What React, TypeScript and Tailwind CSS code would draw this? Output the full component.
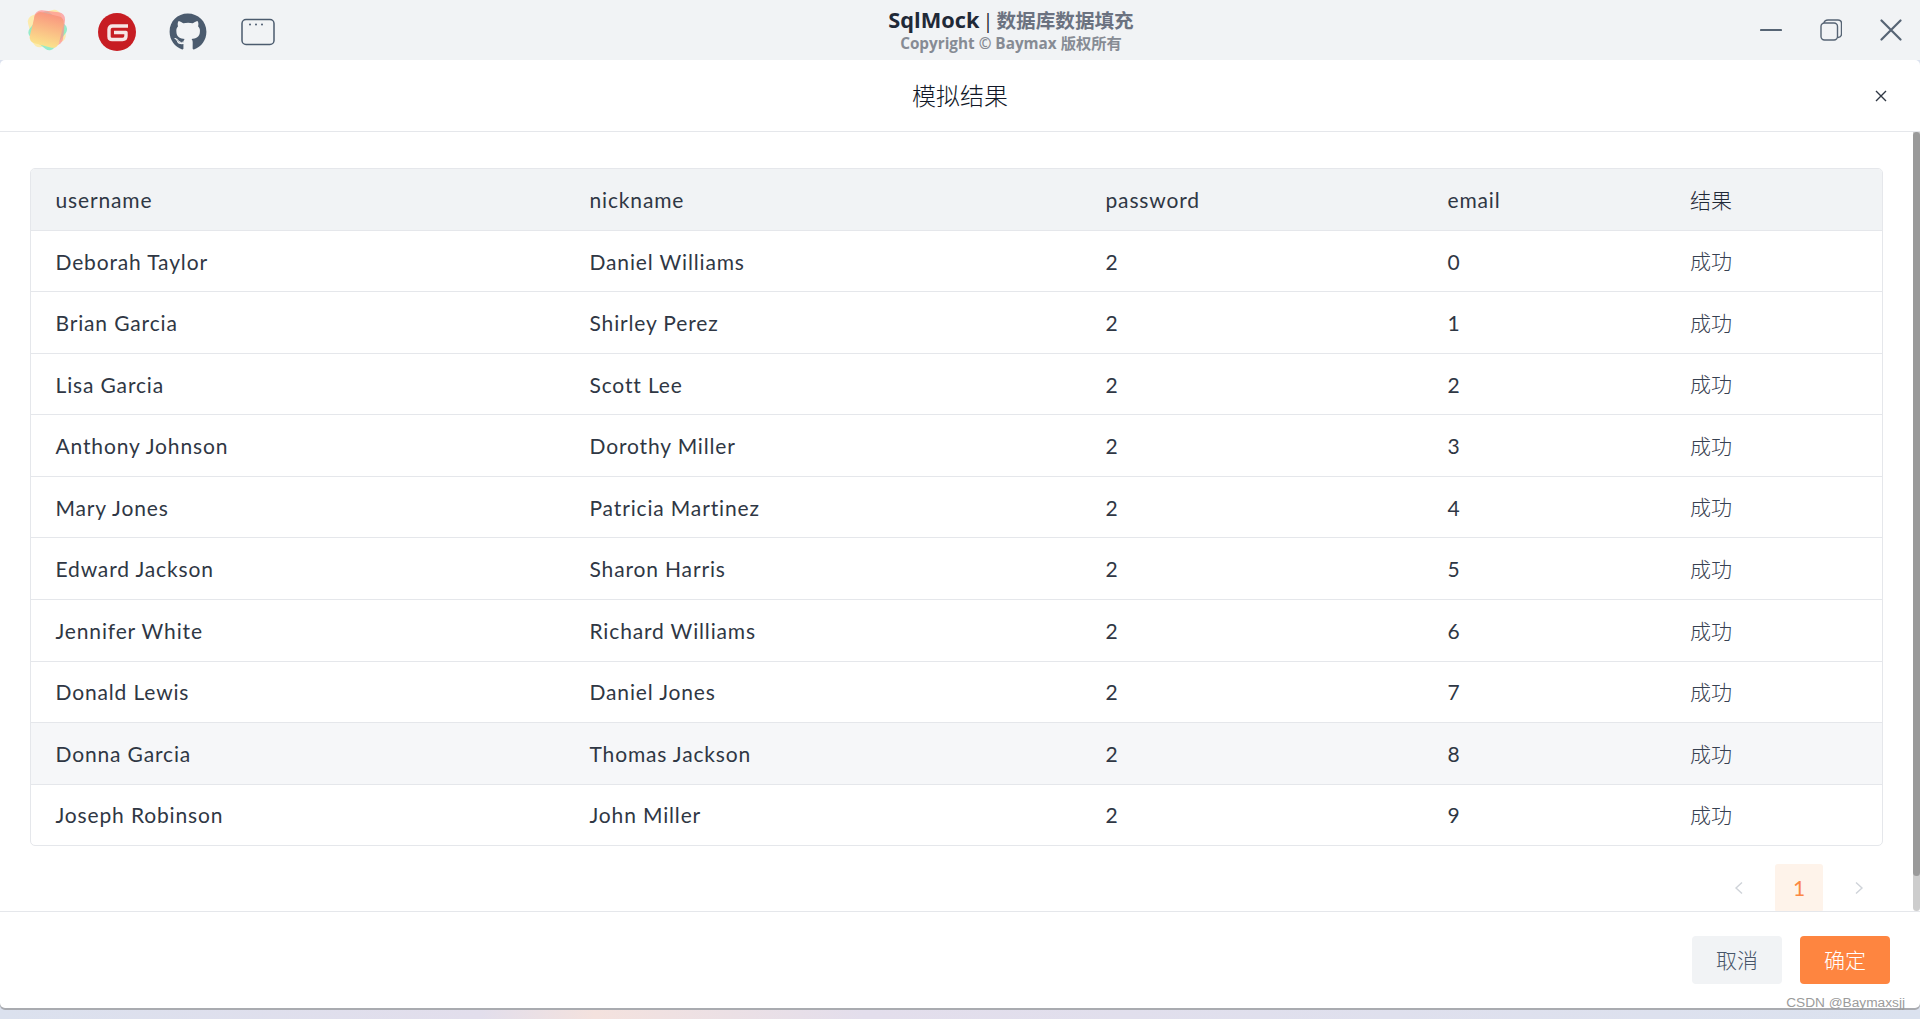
import React from "react";
import { FaGithub } from "react-icons/fa";

const rows = [
  ["Deborah Taylor", "Daniel Williams", "2", "0"],
  ["Brian Garcia", "Shirley Perez", "2", "1"],
  ["Lisa Garcia", "Scott Lee", "2", "2"],
  ["Anthony Johnson", "Dorothy Miller", "2", "3"],
  ["Mary Jones", "Patricia Martinez", "2", "4"],
  ["Edward Jackson", "Sharon Harris", "2", "5"],
  ["Jennifer White", "Richard Williams", "2", "6"],
  ["Donald Lewis", "Daniel Jones", "2", "7"],
  ["Donna Garcia", "Thomas Jackson", "2", "8"],
  ["Joseph Robinson", "John Miller", "2", "9"],
];

const rowHeights = ["h-[61px]", "h-[62px]", "h-[61px]", "h-[62px]", "h-[61px]", "h-[62px]", "h-[62px]", "h-[61px]", "h-[62px]", "h-[60px]"];
const font = { fontFamily: '"Lato","Noto Sans CJK SC",sans-serif' };
const titleFont = { fontFamily: '"Open Sans","Noto Sans CJK SC",sans-serif' };

function Logo() {
  return (
    <svg width="44" height="44" viewBox="0 0 44 44" className="blur-[0.7px]">
      <defs>
        <linearGradient id="lg" x1="0" y1="0" x2="0" y2="1">
          <stop offset="0" stopColor="#f9977f" />
          <stop offset="1" stopColor="#fbe28c" />
        </linearGradient>
      </defs>
      <rect x="5" y="5" width="34" height="33" rx="7" fill="#fdeaa6" opacity="0.9" transform="rotate(-14 22 22)" />
      <rect x="7" y="8" width="31" height="31" rx="6" fill="#7fe8c0" opacity="0.8" transform="rotate(38 22 24)" />
      <rect x="8" y="4" width="31" height="33" rx="7" fill="#ff8f8f" opacity="0.7" transform="rotate(6 22 22)" />
      <rect x="7" y="7" width="30" height="32" rx="6" fill="url(#lg)" transform="rotate(14 22 22)" />
    </svg>
  );
}

function Gitee() {
  return (
    <svg width="38" height="38" viewBox="0 0 38 38">
      <circle cx="19" cy="19" r="19" fill="#c71d23" />
      <path d="M30 13 H14.5 Q11 13 11 16.5 V23.5 Q11 26.5 14 26.5 H24.5 Q28 26.5 28 23 V19.5 H16" fill="none" stroke="#f6e6e6" strokeWidth="3.4" strokeLinejoin="round" />
    </svg>
  );
}

function WindowIcon() {
  return (
    <svg width="34" height="28" viewBox="0 0 34 28" fill="none">
      <rect x="1" y="1.5" width="32" height="25" rx="4" stroke="#4b5b6e" strokeWidth="1.5" />
      <circle cx="9" cy="6.5" r="1" fill="#4b5b6e" />
      <circle cx="15" cy="6.5" r="1" fill="#4b5b6e" />
      <circle cx="21" cy="6.5" r="1" fill="#4b5b6e" />
    </svg>
  );
}

export default function App() {
  return (
    <div
      className="h-[1019px] w-[1920px] flex flex-col overflow-hidden bg-[linear-gradient(90deg,#dbe1ee_0%,#e2deec_25%,#f4e2de_31%,#e3deec_45%,#dbe2ef_100%)] text-[#1f2937]"
      style={font}
    >
      <header className="h-[60px] shrink-0 bg-[#f1f3f5] flex items-center relative">
        <div className="flex items-center pl-[24px]">
          <div className="w-[46px] h-[50px] flex items-center justify-center -mt-[2px]">
            <Logo />
          </div>
          <div className="ml-[28px] mt-[4px]"><Gitee /></div>
          <div className="ml-[33px] mt-[4px] text-[#4b5b6e]"><FaGithub size={38} /></div>
          <div className="ml-[34px] mt-[3px]"><WindowIcon /></div>
        </div>
        <div className="absolute left-[102px] right-0 top-[7px] flex flex-col items-center leading-none">
          <div className="text-[21.8px] font-bold leading-[26px] text-[#1f2937] whitespace-nowrap" style={titleFont}>
            SqlMock<span className="text-[20px] font-normal mx-[3px]">|</span><span className="text-[19.6px] text-[#6b7280]">数据库数据填充</span>
          </div>
          <div className="text-[15.3px] font-bold leading-[18px] text-[#868b94] whitespace-nowrap" style={titleFont}>
            Copyright © Baymax 版权所有
          </div>
        </div>
        <div className="ml-auto flex items-center pr-[18px] gap-[38px]">
          <svg width="22" height="22" viewBox="0 0 22 22" fill="none"><path d="M1 11 H21" stroke="#566474" strokeWidth="2.2" strokeLinecap="round" /></svg>
          <svg width="22" height="22" viewBox="0 0 22 22" fill="none" stroke="#566474" strokeWidth="1.4"><rect x="1" y="4" width="16.5" height="17" rx="3.5" /><path d="M4 4 Q4.5 1 8 1 H18 Q21.5 1 21.5 4.5 V15 Q21.5 18 18 18.5" /></svg>
          <svg width="22" height="22" viewBox="0 0 22 22" fill="none"><path d="M1.5 1.5 L20.5 20.5 M20.5 1.5 L1.5 20.5" stroke="#566474" strokeWidth="2.2" strokeLinecap="round" /></svg>
        </div>
      </header>

      <main className="h-[948px] shrink-0 bg-white flex flex-col relative rounded-[5px] shadow-[0_2px_0_#a9abb0]">
        <div className="h-[72px] shrink-0 border-b border-[#e5e7eb] flex items-center justify-center relative">
          <span className="text-[24px] font-light text-[#111827]">模拟结果</span>
          <svg className="absolute right-[33px] top-[30px]" width="12" height="12" viewBox="0 0 12 12" fill="none"><path d="M1 1 L11 11 M11 1 L1 11" stroke="#303844" strokeWidth="1.4" /></svg>
        </div>

        <div className="h-[779px] shrink-0 relative overflow-hidden">
          <div className="pl-[30px] pr-[37px] pt-[36px]">
            <table className="w-[1853px] table-fixed border-separate border-spacing-0 border border-[#e5e7eb] rounded-[5px] overflow-hidden text-[21px] tracking-[0.85px] text-[#2f3744]">
              <colgroup>
                <col className="w-[534px]" />
                <col className="w-[516px]" />
                <col className="w-[342px]" />
                <col className="w-[244px]" />
                <col className="w-[215px]" />
              </colgroup>
              <thead>
                <tr className="bg-[#f1f3f5] h-[62px]">
                  {["username", "nickname", "password", "email"].map((h) => (
                    <th key={h} className="font-normal text-left pl-[24.5px] border-b border-[#e5e7eb] text-[21px]">{h}</th>
                  ))}
                  <th className="font-light text-left pl-[23px] border-b border-[#e5e7eb] text-[21px] tracking-normal text-[#1f2937]">结果</th>
                </tr>
              </thead>
              <tbody>
                {rows.map((r, i) => (
                  <tr key={r[0]} className={`${rowHeights[i]} ${i === 8 ? "bg-[#f6f7f9]" : ""}`}>
                    {r.map((c, j) => (
                      <td key={j} className={`pl-[24.5px] ${i === 0 || i === 2 || i === 4 ? "pt-[2px]" : ""} ${i < 9 ? "border-b border-[#e5e7eb]" : ""}`}>{c}</td>
                    ))}
                    <td className={`pl-[23px] text-[21px] font-light tracking-normal text-[#374151] ${i < 9 ? "border-b border-[#e5e7eb]" : ""}`}>成功</td>
                  </tr>
                ))}
              </tbody>
            </table>
            <div className="flex items-center justify-end mt-[18px] pr-[19px]">
              <svg width="10" height="14" viewBox="0 0 10 14" fill="none" className="mr-[31px]"><path d="M8 1.5 L2 7 L8 12.5" stroke="#cfd3d9" strokeWidth="1.4" /></svg>
              <div className="w-[48px] h-[48px] rounded-[3px] bg-[#fef3ea] text-[#fb8844] text-[21px] flex items-center justify-center">1</div>
              <svg width="10" height="14" viewBox="0 0 10 14" fill="none" className="ml-[31px]"><path d="M2 1.5 L8 7 L2 12.5" stroke="#cfd3d9" strokeWidth="1.4" /></svg>
            </div>
          </div>
          <div className="absolute right-0 top-0 bottom-0 w-[7px] bg-[#cdcdcd] rounded-b-[4px]">
            <div className="h-[744px] bg-[#9a9a9a] rounded-[4px]" />
          </div>
        </div>

        <div className="flex-1 border-t border-[#e5e7eb] flex justify-end items-start pt-[24px] pr-[30px] gap-[18px] relative">
          <button className="w-[90px] h-[48px] rounded-[4px] bg-[#f1f3f5] text-[#475569] text-[21px] font-light">取消</button>
          <button className="w-[90px] h-[48px] rounded-[4px] bg-[#fe8540] text-white text-[21px] font-light">确定</button>
          <span className="absolute right-[15px] bottom-[-3px] text-[13.7px] leading-[17px] text-[#9b9b9b]" style={{ fontFamily: '"Liberation Sans",sans-serif' }}>CSDN @Baymaxsjj</span>
        </div>
      </main>
    </div>
  );
}
